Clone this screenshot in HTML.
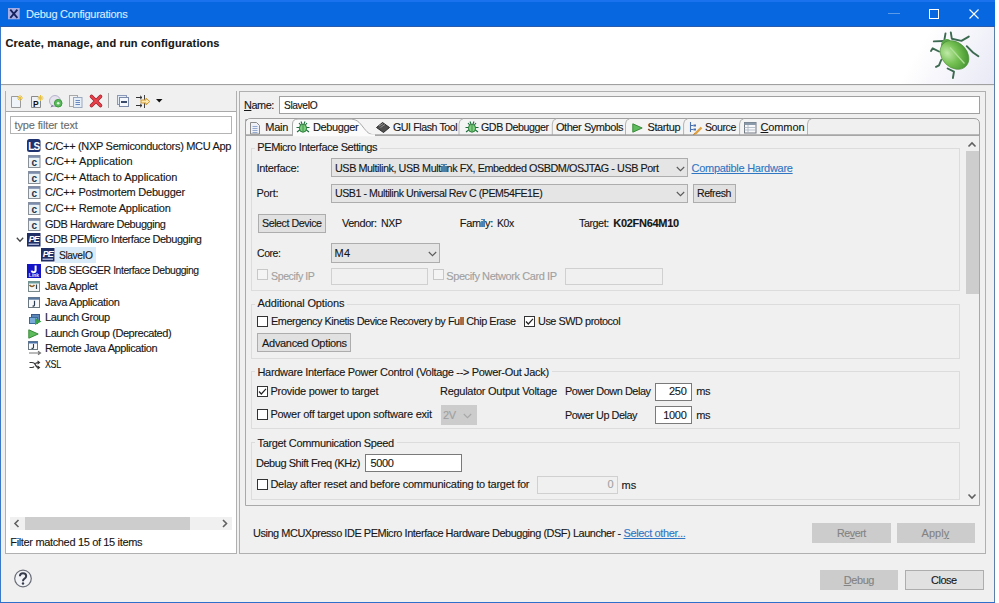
<!DOCTYPE html>
<html><head><meta charset="utf-8"><style>
html,body{margin:0;padding:0;width:999px;height:603px;overflow:hidden;background:#fff;}
body{position:relative;font-family:"Liberation Sans", sans-serif;}
.t{position:absolute;white-space:pre;line-height:14px;font-family:"Liberation Sans", sans-serif;-webkit-text-stroke:0.12px currentColor;}
u{text-decoration:underline;}
svg{position:absolute;overflow:visible;}
</style></head><body>
<div style="position:absolute;left:0px;top:0px;width:995px;height:603px;background:#f0f0f0;"></div>
<div style="position:absolute;left:0px;top:0px;width:995px;height:27px;background:#0667e0;"></div>
<div style="position:absolute;left:0px;top:0px;width:995px;height:2px;background:#1a72ee;"></div>
<div style="position:absolute;left:0px;top:26px;width:995px;height:1px;background:#2a5cae;"></div>
<div style="position:absolute;left:995px;top:0px;width:4px;height:603px;background:#fff;"></div>
<div style="position:absolute;left:0px;top:27px;width:1px;height:576px;background:#3a78c8;"></div>
<div style="position:absolute;left:994px;top:27px;width:1px;height:576px;background:#5a7fa8;"></div>
<div style="position:absolute;left:0px;top:602px;width:995px;height:1px;background:#2d6fca;"></div>
<div style="position:absolute;left:1px;top:27px;width:993px;height:57px;background:#fff;"></div>
<div style="position:absolute;left:1px;top:84px;width:993px;height:1px;background:#a0a0a0;"></div>
<div style="position:absolute;left:1px;top:85px;width:993px;height:1px;background:#e8e8e8;"></div>
<svg style="left:8.3px;top:7.7px" width="12" height="12" viewBox="0 0 12 12"><rect x="0" y="0" width="11.7" height="11.3" fill="#a4ace6"/><path d="M2.3 1.6 L9.4 9.8 M9.4 1.6 L2.3 9.8" stroke="#16205a" stroke-width="1.8"/></svg>
<div style="position:absolute;left:888px;top:13px;width:12px;height:1px;background:#5c9ae8;"></div>
<div style="position:absolute;left:929px;top:9px;width:9px;height:9px;border:1px solid #fff;box-sizing:border-box;width:10px;height:10px;"></div>
<svg style="left:969px;top:9px" width="10" height="10" viewBox="0 0 10 10"><path d="M0.5 0.5 L9.5 9.5 M9.5 0.5 L0.5 9.5" stroke="#fff" stroke-width="1.1"/></svg>
<div style="position:absolute;left:880px;top:27px;width:114px;height:57px;background:linear-gradient(120deg,#fff 35%,#e9e9f6 100%);"></div>
<div style="position:absolute;left:5px;top:90.5px;width:232px;height:463px;border:1px solid #b0b0b0;box-sizing:border-box;background:#fff;"></div>
<div style="position:absolute;left:6px;top:91px;width:230px;height:20px;background:#f0f0f0;"></div>
<div style="position:absolute;left:6px;top:111px;width:230px;height:1px;background:#a9a9a9;"></div>
<div style="position:absolute;left:10px;top:116px;width:222px;height:18px;border:1px solid #b4b4b4;box-sizing:border-box;background:#fff;"></div>
<div style="position:absolute;left:54.5px;top:247px;width:41.5px;height:15.5px;background:#d9ebf9;"></div>
<div style="position:absolute;left:10px;top:517px;width:222px;height:13px;background:#f0f0f0;"></div>
<div style="position:absolute;left:25px;top:517px;width:165px;height:13px;background:#cdcdcd;"></div>
<svg style="left:13px;top:519px" width="8" height="9" viewBox="0 0 8 9"><path d="M5.5 1 L2 4.5 L5.5 8" fill="none" stroke="#606060" stroke-width="1.6"/></svg>
<svg style="left:221px;top:519px" width="8" height="9" viewBox="0 0 8 9"><path d="M2 1 L5.5 4.5 L2 8" fill="none" stroke="#606060" stroke-width="1.6"/></svg>
<svg style="left:14px;top:570px" width="18" height="18" viewBox="0 0 18 18"><circle cx="9" cy="8.5" r="8.3" fill="#f2f3f7" stroke="#6a6e78" stroke-width="1.2"/><path d="M5.9 6.3 Q5.9 3.2 9 3.2 Q12.2 3.2 12.2 6 Q12.2 7.8 10.3 8.8 Q9 9.5 9 11.2" fill="none" stroke="#363c4c" stroke-width="2"/><circle cx="9" cy="13.5" r="1.2" fill="#363c4c"/></svg>
<div style="position:absolute;left:239px;top:91px;width:747px;height:462.5px;border:1px solid #b0b0b0;box-sizing:border-box;"></div>
<div style="position:absolute;left:279px;top:95.5px;width:701px;height:18px;border:1px solid #a0a0a0;box-sizing:border-box;background:#fff;"></div>
<div style="position:absolute;left:245px;top:118.5px;width:735px;height:387px;border:1px solid #a9a9a9;border-top-right-radius:6px;box-sizing:border-box;background:#f0f0f0;"></div>
<div style="position:absolute;left:246px;top:119.5px;width:733px;height:15px;background:#f2f2f2;border-top-right-radius:5px;"></div>
<div style="position:absolute;left:245px;top:134.5px;width:735px;height:1px;background:#a9a9a9;"></div>
<div style="position:absolute;left:965px;top:136px;width:14px;height:368px;background:#f0f0f0;"></div>
<div style="position:absolute;left:965.5px;top:151.3px;width:13px;height:142.5px;background:#cdcdcd;"></div>
<svg style="left:967px;top:141px" width="10" height="7" viewBox="0 0 10 7"><path d="M1.5 5.5 L5 2 L8.5 5.5" fill="none" stroke="#606060" stroke-width="1.6"/></svg>
<svg style="left:967px;top:493px" width="10" height="7" viewBox="0 0 10 7"><path d="M1.5 1.5 L5 5 L8.5 1.5" fill="none" stroke="#606060" stroke-width="1.6"/></svg>
<div style="position:absolute;left:251px;top:148px;width:709px;height:143px;border:1px solid #dcdcdc;box-sizing:border-box;"></div>
<div style="position:absolute;left:255px;top:147px;width:125px;height:3px;background:#f0f0f0;"></div>
<div style="position:absolute;left:251px;top:303.5px;width:709px;height:55.5px;border:1px solid #dcdcdc;box-sizing:border-box;"></div>
<div style="position:absolute;left:255px;top:302.5px;width:92px;height:3px;background:#f0f0f0;"></div>
<div style="position:absolute;left:251px;top:370.5px;width:709px;height:58.5px;border:1px solid #dcdcdc;box-sizing:border-box;"></div>
<div style="position:absolute;left:255px;top:369.5px;width:297px;height:3px;background:#f0f0f0;"></div>
<div style="position:absolute;left:251px;top:442px;width:709px;height:57.5px;border:1px solid #dcdcdc;box-sizing:border-box;"></div>
<div style="position:absolute;left:255px;top:441px;width:142px;height:3px;background:#f0f0f0;"></div>
<div style="position:absolute;left:331px;top:158.3px;width:356.5px;height:19.2px;border:1px solid #adadad;box-sizing:border-box;background:#e5e5e5;"></div>
<svg style="left:676px;top:166px" width="9" height="6" viewBox="0 0 9 6"><path d="M0.8 1 L4.5 4.7 L8.2 1" fill="none" stroke="#5a5a5a" stroke-width="1.1"/></svg>
<div style="position:absolute;left:331px;top:183.5px;width:356.5px;height:19px;border:1px solid #adadad;box-sizing:border-box;background:#e5e5e5;"></div>
<svg style="left:676px;top:191px" width="9" height="6" viewBox="0 0 9 6"><path d="M0.8 1 L4.5 4.7 L8.2 1" fill="none" stroke="#5a5a5a" stroke-width="1.1"/></svg>
<div style="position:absolute;left:693px;top:183.5px;width:42.5px;height:19px;border:1px solid #adadad;box-sizing:border-box;background:#e1e1e1;"></div>
<div style="position:absolute;left:257.5px;top:213.5px;width:68px;height:19.5px;border:1px solid #adadad;box-sizing:border-box;background:#e1e1e1;"></div>
<div style="position:absolute;left:331px;top:243.4px;width:109.2px;height:19.2px;border:1px solid #adadad;box-sizing:border-box;background:#e5e5e5;"></div>
<svg style="left:428px;top:251px" width="9" height="6" viewBox="0 0 9 6"><path d="M0.8 1 L4.5 4.7 L8.2 1" fill="none" stroke="#5a5a5a" stroke-width="1.1"/></svg>
<svg style="left:257px;top:269px" width="11" height="11" viewBox="0 0 11 11"><rect x="0.5" y="0.5" width="10" height="10" fill="#f4f4f4" stroke="#c8c8c8" stroke-width="1"/></svg>
<div style="position:absolute;left:331px;top:268px;width:97px;height:17px;border:1px solid #d0d0d0;box-sizing:border-box;background:#f0f0f0;"></div>
<svg style="left:433px;top:269px" width="11" height="11" viewBox="0 0 11 11"><rect x="0.5" y="0.5" width="10" height="10" fill="#f4f4f4" stroke="#c8c8c8" stroke-width="1"/></svg>
<div style="position:absolute;left:565px;top:267.5px;width:97.5px;height:17.8px;border:1px solid #d0d0d0;box-sizing:border-box;background:#f0f0f0;"></div>
<svg style="left:257px;top:315.5px" width="11" height="11" viewBox="0 0 11 11"><rect x="0.5" y="0.5" width="10" height="10" fill="#fff" stroke="#333" stroke-width="1"/></svg>
<svg style="left:523.5px;top:315.5px" width="11" height="11" viewBox="0 0 11 11"><rect x="0.5" y="0.5" width="10" height="10" fill="#fff" stroke="#333" stroke-width="1"/><path d="M2 5.5 L4.3 8 L9 2.8" fill="none" stroke="#222" stroke-width="1.2"/></svg>
<div style="position:absolute;left:257.4px;top:333px;width:93.2px;height:19.4px;border:1px solid #adadad;box-sizing:border-box;background:#e1e1e1;"></div>
<svg style="left:257px;top:386.3px" width="11" height="11" viewBox="0 0 11 11"><rect x="0.5" y="0.5" width="10" height="10" fill="#fff" stroke="#333" stroke-width="1"/><path d="M2 5.5 L4.3 8 L9 2.8" fill="none" stroke="#222" stroke-width="1.2"/></svg>
<div style="position:absolute;left:655.2px;top:382.5px;width:36.7px;height:18px;border:1px solid #7a7a7a;box-sizing:border-box;background:#fff;"></div>
<svg style="left:257px;top:408.6px" width="11" height="11" viewBox="0 0 11 11"><rect x="0.5" y="0.5" width="10" height="10" fill="#fff" stroke="#333" stroke-width="1"/></svg>
<div style="position:absolute;left:440.5px;top:405px;width:36px;height:19.6px;border:1px solid #cccccc;box-sizing:border-box;background:#cccccc;"></div>
<svg style="left:463px;top:413px" width="9" height="6" viewBox="0 0 9 6"><path d="M0.8 1 L4.5 4.7 L8.2 1" fill="none" stroke="#a8a8a8" stroke-width="1.1"/></svg>
<div style="position:absolute;left:655.2px;top:405.6px;width:36.7px;height:18.1px;border:1px solid #7a7a7a;box-sizing:border-box;background:#fff;"></div>
<div style="position:absolute;left:365px;top:453.7px;width:96.5px;height:17.9px;border:1px solid #7a7a7a;box-sizing:border-box;background:#fff;"></div>
<svg style="left:257px;top:479.1px" width="11" height="11" viewBox="0 0 11 11"><rect x="0.5" y="0.5" width="10" height="10" fill="#fff" stroke="#333" stroke-width="1"/></svg>
<div style="position:absolute;left:537.3px;top:476.1px;width:80.3px;height:18.3px;border:1px solid #d0d0d0;box-sizing:border-box;background:#f0f0f0;"></div>
<div style="position:absolute;left:812.4px;top:522.9px;width:78.2px;height:19.9px;background:#cccccc;"></div>
<div style="position:absolute;left:896.6px;top:522.9px;width:78.3px;height:19.9px;background:#cccccc;"></div>
<div style="position:absolute;left:819.9px;top:569.7px;width:78.3px;height:19.9px;background:#cccccc;"></div>
<div style="position:absolute;left:905.2px;top:570px;width:78.5px;height:19.7px;border:1px solid #adadad;box-sizing:border-box;background:#e1e1e1;"></div>
<svg style="left:245px;top:118px" width="736" height="20" viewBox="0 0 736 20"><path d="M0.5 17 V6 Q0.5 0.5 6 0.5 H729 Q734.5 0.5 734.5 6 V17" fill="#f0f0f0" stroke="#a0a0a0" stroke-width="1"/><path d="M1 17 V6 Q1 1 6 1 H562.5 V17 Z" fill="#f4f4f4"/><path d="M214 17 V6 Q214 1.5 218 0.8" fill="none" stroke="#b4b4b4" stroke-width="1"/><path d="M307.3 17 V6 Q307.3 1.5 311.3 0.8" fill="none" stroke="#b4b4b4" stroke-width="1"/><path d="M380.5 17 V6 Q380.5 1.5 384.5 0.8" fill="none" stroke="#b4b4b4" stroke-width="1"/><path d="M438.6 17 V6 Q438.6 1.5 442.6 0.8" fill="none" stroke="#b4b4b4" stroke-width="1"/><path d="M494.6 17 V6 Q494.6 1.5 498.6 0.8" fill="none" stroke="#b4b4b4" stroke-width="1"/><path d="M562.5 17 V6 Q562.5 1.5 566.5 0.8" fill="none" stroke="#b4b4b4" stroke-width="1"/><path d="M0.5 16.8 H47.5 M130 16.8 H735" stroke="#a0a0a0" stroke-width="1"/><path d="M47.5 17.5 V6 Q47.5 1 53 1 H104 C112 1 114 4 118 9 C122 14 124 16.8 130 16.8 V17.5 Z" fill="#fbfbfb" stroke="#a8a8a8" stroke-width="1"/><rect x="48" y="16.3" width="82" height="2" fill="#fbfbfb"/></svg>
<svg style="left:11px;top:95px" width="13" height="13" viewBox="0 0 13 13"><path d="M0.5 1.5 H7 L9.5 4 V12.5 H0.5 Z" fill="#eef4fa" stroke="#9a9a9a"/><path d="M9 0 V6 M6 3 H12 M7 1 L11 5 M11 1 L7 5" stroke="#e8c040" stroke-width="1"/></svg>
<svg style="left:31px;top:95px" width="14" height="13" viewBox="0 0 14 13"><path d="M0.5 1.5 H7 L9.5 4 V12.5 H0.5 Z" fill="#eef2f6" stroke="#8a8a8a"/><text x="2" y="11.5" font-family="Liberation Sans" font-weight="bold" font-size="8.5" fill="#111">P</text><path d="M9.5 0 V6 M6.5 3 H12.5 M7.5 1 L11.5 5 M11.5 1 L7.5 5" stroke="#e8c040" stroke-width="1"/></svg>
<svg style="left:49px;top:95px" width="14" height="13" viewBox="0 0 14 13"><circle cx="6" cy="6" r="5.5" fill="#e6e2ee" stroke="#b8b2cc"/><path d="M3 10 L1.5 12.5 L5 11" fill="#7a6a9a"/><circle cx="9.2" cy="8.2" r="3.8" fill="#5cb85c" stroke="#3a9a3a"/><circle cx="9.2" cy="8.2" r="1.3" fill="#dff5df"/></svg>
<svg style="left:69px;top:95px" width="14" height="13" viewBox="0 0 14 13"><rect x="0.5" y="0.5" width="8" height="11" fill="#f2f2f2" stroke="#a8a8a8"/><rect x="4.5" y="2.5" width="8.5" height="10" fill="#e6eef8" stroke="#9aa8c0"/><path d="M6.5 5.5 H11 M6.5 7.5 H11 M6.5 9.5 H11" stroke="#6a88c0"/></svg>
<svg style="left:90px;top:95px" width="12" height="12" viewBox="0 0 12 12"><path d="M1.5 1.5 L10.5 10.5 M10.5 1.5 L1.5 10.5" stroke="#a02028" stroke-width="3.6" stroke-linecap="round"/><path d="M1.5 1.5 L10.5 10.5 M10.5 1.5 L1.5 10.5" stroke="#e8404a" stroke-width="2.4" stroke-linecap="round"/></svg>
<div style="position:absolute;left:107.5px;top:93px;width:1.2px;height:15px;background:#a8a8a8;"></div>
<svg style="left:117px;top:95px" width="12" height="12" viewBox="0 0 12 12"><rect x="0.5" y="0.5" width="9" height="9" fill="#e4ecf6" stroke="#8a9ab8"/><rect x="2.5" y="2.5" width="9" height="9" fill="#f4f8fc" stroke="#7a8aa8"/><rect x="4" y="6" width="6" height="2" fill="#3a4a6a"/></svg>
<svg style="left:136px;top:95px" width="15" height="13" viewBox="0 0 15 13"><path d="M0 2.5 H6 M4 0.8 L6 2.5 L4 4.2 M0 10.5 H6 M4 8.8 L6 10.5 L4 12.2" fill="none" stroke="#333" stroke-width="1"/><path d="M8.5 0 V13" stroke="#444" stroke-width="1"/><path d="M5 5 H10 V3.2 L13.8 6.5 L10 9.8 V8 H5 Z" fill="#fde8b0" stroke="#d09a30" stroke-width="1"/></svg>
<svg style="left:156px;top:99px" width="7" height="4" viewBox="0 0 7 4"><path d="M0 0 H6.5 L3.25 3.5 Z" fill="#111"/></svg>
<svg style="left:27px;top:139px" width="14" height="13" viewBox="0 0 14 13"><rect x="0" y="0" width="13.5" height="13" rx="2.5" fill="#1f3270"/><text x="6.8" y="10.8" text-anchor="middle" font-family="Liberation Sans" font-weight="bold" font-size="10" letter-spacing="-0.8" fill="#fff">LS</text></svg>
<svg style="left:28px;top:155.2px" width="13" height="13" viewBox="0 0 13 13"><rect x="0.5" y="0.5" width="11.5" height="12" fill="#eaf2f6" stroke="#8a9098"/><rect x="0.5" y="0.5" width="11.5" height="2.3" fill="#7c8cac"/><text x="6.3" y="11" text-anchor="middle" font-family="Liberation Sans" font-weight="bold" font-size="10" fill="#24344a">c</text></svg>
<svg style="left:28px;top:170.79999999999998px" width="13" height="13" viewBox="0 0 13 13"><rect x="0.5" y="0.5" width="11.5" height="12" fill="#eaf2f6" stroke="#8a9098"/><rect x="0.5" y="0.5" width="11.5" height="2.3" fill="#7c8cac"/><text x="6.3" y="11" text-anchor="middle" font-family="Liberation Sans" font-weight="bold" font-size="10" fill="#24344a">c</text></svg>
<svg style="left:28px;top:186.39999999999998px" width="13" height="13" viewBox="0 0 13 13"><rect x="0.5" y="0.5" width="11.5" height="12" fill="#eaf2f6" stroke="#8a9098"/><rect x="0.5" y="0.5" width="11.5" height="2.3" fill="#7c8cac"/><text x="6.3" y="11" text-anchor="middle" font-family="Liberation Sans" font-weight="bold" font-size="10" fill="#24344a">c</text></svg>
<svg style="left:28px;top:202.0px" width="13" height="13" viewBox="0 0 13 13"><rect x="0.5" y="0.5" width="11.5" height="12" fill="#eaf2f6" stroke="#8a9098"/><rect x="0.5" y="0.5" width="11.5" height="2.3" fill="#7c8cac"/><text x="6.3" y="11" text-anchor="middle" font-family="Liberation Sans" font-weight="bold" font-size="10" fill="#24344a">c</text></svg>
<svg style="left:28px;top:217.6px" width="13" height="13" viewBox="0 0 13 13"><rect x="0.5" y="0.5" width="11.5" height="12" fill="#eaf2f6" stroke="#8a9098"/><rect x="0.5" y="0.5" width="11.5" height="2.3" fill="#7c8cac"/><text x="6.3" y="11" text-anchor="middle" font-family="Liberation Sans" font-weight="bold" font-size="10" fill="#24344a">c</text></svg>
<svg style="left:27px;top:233px" width="14" height="14" viewBox="0 0 14 14"><rect x="0" y="0" width="13.5" height="13.5" fill="#1f2f66"/><text x="6.8" y="9.3" text-anchor="middle" font-family="Liberation Sans" font-weight="bold" font-style="italic" font-size="9" letter-spacing="-1" fill="#fff">PE</text><rect x="1.5" y="10.6" width="10.5" height="1.2" fill="#c8d0f0"/></svg>
<svg style="left:41px;top:248.2px" width="14" height="14" viewBox="0 0 14 14"><rect x="0" y="0" width="13.5" height="13.5" fill="#1f2f66"/><text x="6.8" y="9.3" text-anchor="middle" font-family="Liberation Sans" font-weight="bold" font-style="italic" font-size="9" letter-spacing="-1" fill="#fff">PE</text><rect x="1.5" y="10.6" width="10.5" height="1.2" fill="#c8d0f0"/></svg>
<svg style="left:27px;top:264px" width="14" height="14" viewBox="0 0 14 14"><rect x="0" y="0" width="14" height="14" fill="#1414c8"/><path d="M8.6 1.5 V6.2 Q8.6 8.2 6.5 8.2 Q4.8 8.2 4.6 6.6" fill="none" stroke="#fff" stroke-width="2"/><text x="7" y="13" text-anchor="middle" font-family="Liberation Sans" font-weight="bold" font-size="5" fill="#e8e8ff">Link</text></svg>
<svg style="left:28px;top:281px" width="12" height="11" viewBox="0 0 12 11"><rect x="0.5" y="0.5" width="11" height="10" fill="#f4f6f6" stroke="#7a8a8a"/><rect x="0.5" y="0.5" width="11" height="2" fill="#6a9a9a"/><path d="M1.5 4 Q4 7 6.5 4" fill="none" stroke="#8a5a20" stroke-width="1.6"/><path d="M8.5 3.5 V8" stroke="#304050" stroke-width="1.2"/></svg>
<svg style="left:28px;top:296.5px" width="12" height="11" viewBox="0 0 12 11"><rect x="0.5" y="0.5" width="11" height="10" fill="#f6f8fa" stroke="#6a7680"/><rect x="0.5" y="0.5" width="11" height="2.2" fill="#5a7aa0"/><path d="M6.5 3.8 V8 Q6.5 9.2 4.5 9" fill="none" stroke="#2a3a50" stroke-width="1.2"/></svg>
<svg style="left:29px;top:313.5px" width="13" height="11" viewBox="0 0 13 11"><rect x="2.5" y="0.5" width="8" height="6" fill="#5a86b8" stroke="#3a5a8a"/><rect x="0.5" y="3.5" width="8" height="6" fill="#7aaad8" stroke="#3a6a9a"/><path d="M6 4 L12.5 7.5 L6 11 Z" fill="#3aa04a"/></svg>
<svg style="left:28px;top:328.8px" width="11" height="10" viewBox="0 0 11 10"><path d="M0.8 0.8 L10.2 5 L0.8 9.2 Z" fill="#5cbc5c" stroke="#3a8a3a" stroke-width="1"/></svg>
<svg style="left:28px;top:341px" width="14" height="14" viewBox="0 0 14 14"><rect x="0.5" y="0.5" width="9" height="8" fill="#f6f8fa" stroke="#6a7680"/><rect x="0.5" y="0.5" width="9" height="2" fill="#4a70a8"/><path d="M5.5 3 V6.5 Q5.5 7.5 3.5 7.3" fill="none" stroke="#2a3a50" stroke-width="1.1"/><path d="M1 12 H12 M10 10.2 L12.5 12 L10 13.8" fill="none" stroke="#777" stroke-width="1.2"/></svg>
<svg style="left:28.5px;top:360px" width="11" height="10" viewBox="0 0 11 10"><path d="M0.5 2.5 H3 Q5.5 2.5 6.5 5 Q7.5 7.5 10 7.5 M0.5 7.5 H3 Q4.5 7.5 5 6.5 M6.5 3.5 Q7.5 2.5 10 2.5" fill="none" stroke="#333" stroke-width="1.2"/><path d="M8.5 0.8 L10.5 2.5 L8.5 4.2 M8.5 5.8 L10.5 7.5 L8.5 9.2" fill="none" stroke="#333" stroke-width="1.1"/></svg>
<svg style="left:16px;top:237px" width="8" height="6" viewBox="0 0 8 6"><path d="M0.8 0.8 L4 4.2 L7.2 0.8" fill="none" stroke="#444" stroke-width="1.3"/></svg>
<svg style="left:250px;top:121.5px" width="10" height="12.5" viewBox="0 0 10 12.5"><path d="M0.5 0.5 H6.5 L9.5 3.5 V12 H0.5 Z" fill="#eef2f8" stroke="#8a8a8a"/><path d="M2.5 4.5 H7.5 M2.5 6.5 H7.5 M2.5 8.5 H7.5 M2.5 10.5 H7.5" stroke="#8aa0c8" stroke-width="0.9"/></svg>
<svg style="left:296px;top:121px" width="14" height="13" viewBox="0 0 14 13"><g stroke="#1a6a3a" stroke-width="1.1" fill="none"><path d="M3 2 L5 4.5 M11 2 L9 4.5 M0.5 6.5 L3.5 6.5 M13.5 6.5 L10.5 6.5 M1 11 L4 8.8 M13 11 L10 8.8 M5 0.5 L6 3 M9 0.5 L8 3"/></g><ellipse cx="7" cy="7.2" rx="3.6" ry="4" fill="#7ed07e" stroke="#2a7a3a" stroke-width="1"/><path d="M7 4 V10.5" stroke="#2a7a3a" stroke-width="0.7"/></svg>
<svg style="left:464.5px;top:121px" width="14" height="13" viewBox="0 0 14 13"><g stroke="#1a6a3a" stroke-width="1.1" fill="none"><path d="M3 2 L5 4.5 M11 2 L9 4.5 M0.5 6.5 L3.5 6.5 M13.5 6.5 L10.5 6.5 M1 11 L4 8.8 M13 11 L10 8.8 M5 0.5 L6 3 M9 0.5 L8 3"/></g><ellipse cx="7" cy="7.2" rx="3.6" ry="4" fill="#7ed07e" stroke="#2a7a3a" stroke-width="1"/><path d="M7 4 V10.5" stroke="#2a7a3a" stroke-width="0.7"/></svg>
<svg style="left:376px;top:121.5px" width="14" height="11" viewBox="0 0 14 11"><path d="M6.5 0.5 L13.5 5.5 L7.5 10.5 L0.5 5.5 Z" fill="#505050" stroke="#2a2a2a"/><path d="M3 4 L7 1.5 M4.5 5.5 L9 2.5" stroke="#a0a0a0" stroke-width="0.8"/></svg>
<svg style="left:631.5px;top:122.8px" width="11" height="10" viewBox="0 0 11 10"><path d="M0.8 0.8 L10.2 5 L0.8 9.2 Z" fill="#5cbc5c" stroke="#3a8a3a" stroke-width="1"/></svg>
<svg style="left:688.5px;top:121.5px" width="14" height="13" viewBox="0 0 14 13"><path d="M1.5 0 V10 M1.5 3.5 H4.5 M1.5 7.5 H4.5" stroke="#4a70b0" stroke-width="1.1" fill="none"/><rect x="4.5" y="2.5" width="2.5" height="2" fill="#4a70b0"/><rect x="4.5" y="6.5" width="2.5" height="2" fill="#4a70b0"/><path d="M5.5 12.5 L12.5 5.5" stroke="#e0a040" stroke-width="2.4"/><path d="M4.5 13 L5.5 11.5" stroke="#b07020" stroke-width="1"/></svg>
<svg style="left:744px;top:121.5px" width="12.5" height="11.5" viewBox="0 0 12.5 11.5"><rect x="0.5" y="0.5" width="11.5" height="10.5" fill="#f8f8fa" stroke="#707880"/><rect x="0.5" y="0.5" width="11.5" height="2.5" fill="#8a9aaa"/><path d="M0.5 5.5 H12 M0.5 8 H12 M4 3 V11" stroke="#a8b4c0" stroke-width="0.8"/></svg>
<svg style="left:928px;top:28px" width="56" height="54" viewBox="0 0 56 54"><defs><radialGradient id="bg1" cx="0.35" cy="0.3" r="0.85"><stop offset="0" stop-color="#c0eaa8"/><stop offset="0.45" stop-color="#74c052"/><stop offset="1" stop-color="#3a8a2a"/></radialGradient></defs><g fill="none" stroke="#3c6a50" stroke-width="1.9" stroke-linecap="round" stroke-linejoin="round"><path d="M16.4 11.8 L17.5 5.4"/><path d="M16 13 L5.8 13.4"/><path d="M22.8 4.4 L23.8 10.7 L33.4 12.9 L40.8 8.6"/><path d="M38.7 18.2 L45 24.5 L50.4 28.3"/><path d="M11 23.5 L4.7 20.3 L3 23"/><path d="M13.2 32 L11 37.3 L8 38.9"/><path d="M19.6 40.5 L26 43.6 L24.9 50"/></g><ellipse cx="18" cy="16" rx="5.5" ry="4.5" fill="#5aa848" transform="rotate(-45 18 16)"/><ellipse cx="26.5" cy="27" rx="12.5" ry="16" fill="url(#bg1)" stroke="#4a8a3a" stroke-width="0.6" transform="rotate(-45 26.5 27)"/><path d="M22 19.5 L36.5 35.5" stroke="#b0e098" stroke-width="1.2"/></svg>
<div class="t" style="left:26.10px;top:6.70px;font-size:11px;letter-spacing:-0.253px;color:#dcebff;">Debug Configurations</div>
<div class="t" style="left:5.50px;top:35.50px;font-size:11px;letter-spacing:0.167px;color:#161616;font-weight:700;">Create, manage, and run configurations</div>
<div class="t" style="left:14.50px;top:117.80px;font-size:11px;letter-spacing:-0.135px;color:#6d6d6d;">type filter text</div>
<div class="t" style="left:45.00px;top:138.60px;font-size:11px;letter-spacing:-0.308px;color:#161616;">C/C++ (NXP Semiconductors) MCU App</div>
<div class="t" style="left:45.00px;top:154.20px;font-size:11px;letter-spacing:-0.023px;color:#161616;">C/C++ Application</div>
<div class="t" style="left:45.00px;top:169.80px;font-size:11px;letter-spacing:-0.055px;color:#161616;">C/C++ Attach to Application</div>
<div class="t" style="left:45.00px;top:185.40px;font-size:11px;letter-spacing:-0.226px;color:#161616;">C/C++ Postmortem Debugger</div>
<div class="t" style="left:45.00px;top:201.00px;font-size:11px;letter-spacing:-0.167px;color:#161616;">C/C++ Remote Application</div>
<div class="t" style="left:45.00px;top:216.60px;font-size:11px;letter-spacing:-0.450px;color:#161616;transform:scaleX(0.9958);transform-origin:0 0;">GDB Hardware Debugging</div>
<div class="t" style="left:45.00px;top:232.20px;font-size:11px;letter-spacing:-0.450px;color:#161616;transform:scaleX(0.9994);transform-origin:0 0;">GDB PEMicro Interface Debugging</div>
<div class="t" style="left:58.50px;top:247.80px;font-size:11px;letter-spacing:-0.450px;color:#161616;transform:scaleX(0.9311);transform-origin:0 0;">SlaveIO</div>
<div class="t" style="left:45.00px;top:263.40px;font-size:11px;letter-spacing:-0.450px;color:#161616;transform:scaleX(0.9454);transform-origin:0 0;">GDB SEGGER Interface Debugging</div>
<div class="t" style="left:45.00px;top:279.00px;font-size:11px;letter-spacing:-0.408px;color:#161616;">Java Applet</div>
<div class="t" style="left:45.00px;top:294.60px;font-size:11px;letter-spacing:-0.313px;color:#161616;">Java Application</div>
<div class="t" style="left:45.00px;top:310.20px;font-size:11px;letter-spacing:-0.411px;color:#161616;">Launch Group</div>
<div class="t" style="left:45.00px;top:325.80px;font-size:11px;letter-spacing:-0.432px;color:#161616;">Launch Group (Deprecated)</div>
<div class="t" style="left:45.00px;top:341.40px;font-size:11px;letter-spacing:-0.385px;color:#161616;">Remote Java Application</div>
<div class="t" style="left:45.00px;top:357.00px;font-size:11px;letter-spacing:-0.450px;color:#161616;transform:scaleX(0.8097);transform-origin:0 0;">XSL</div>
<div class="t" style="left:10.30px;top:534.60px;font-size:11px;letter-spacing:-0.344px;color:#161616;">Filter matched 15 of 15 items</div>
<div class="t" style="left:244.20px;top:97.60px;font-size:11px;letter-spacing:-0.450px;color:#161616;transform:scaleX(0.9897);transform-origin:0 0;"><u>N</u>ame:</div>
<div class="t" style="left:284.30px;top:97.60px;font-size:11px;letter-spacing:-0.450px;color:#161616;transform:scaleX(0.9283);transform-origin:0 0;">SlaveIO</div>
<div class="t" style="left:265.30px;top:119.80px;font-size:11px;letter-spacing:-0.248px;color:#161616;">Main</div>
<div class="t" style="left:312.90px;top:119.80px;font-size:11px;letter-spacing:-0.375px;color:#161616;">Debugger</div>
<div class="t" style="left:392.50px;top:119.80px;font-size:11px;letter-spacing:-0.450px;color:#161616;transform:scaleX(0.9694);transform-origin:0 0;">GUI Flash Tool</div>
<div class="t" style="left:481.10px;top:119.80px;font-size:11px;letter-spacing:-0.450px;color:#161616;transform:scaleX(0.9701);transform-origin:0 0;">GDB Debugger</div>
<div class="t" style="left:555.90px;top:119.80px;font-size:11px;letter-spacing:-0.429px;color:#161616;">Other Symbols</div>
<div class="t" style="left:647.50px;top:119.80px;font-size:11px;letter-spacing:-0.411px;color:#161616;">Startup</div>
<div class="t" style="left:705.10px;top:119.80px;font-size:11px;letter-spacing:-0.450px;color:#161616;transform:scaleX(0.9617);transform-origin:0 0;">Source</div>
<div class="t" style="left:760.50px;top:119.80px;font-size:11px;letter-spacing:-0.125px;color:#161616;"><u>C</u>ommon</div>
<div class="t" style="left:257.30px;top:140.00px;font-size:11px;letter-spacing:-0.397px;color:#161616;">PEMicro Interface Settings</div>
<div class="t" style="left:256.50px;top:161.00px;font-size:11px;letter-spacing:-0.340px;color:#161616;">Interface:</div>
<div class="t" style="left:334.50px;top:161.00px;font-size:11px;letter-spacing:-0.450px;color:#161616;transform:scaleX(0.9823);transform-origin:0 0;">USB Multilink, USB Multilink FX, Embedded OSBDM/OSJTAG - USB Port</div>
<div class="t" style="left:691.50px;top:160.80px;font-size:11px;letter-spacing:-0.277px;color:#2f76c3;text-decoration:underline;">Compatible Hardware</div>
<div class="t" style="left:256.50px;top:186.00px;font-size:11px;letter-spacing:-0.309px;color:#161616;">Port:</div>
<div class="t" style="left:334.50px;top:186.20px;font-size:11px;letter-spacing:-0.450px;color:#161616;transform:scaleX(0.9646);transform-origin:0 0;">USB1 - Multilink Universal Rev C (PEM54FE1E)</div>
<div class="t" style="left:697.10px;top:186.20px;font-size:11px;letter-spacing:-0.450px;color:#161616;transform:scaleX(0.9589);transform-origin:0 0;">Refresh</div>
<div class="t" style="left:261.90px;top:216.20px;font-size:11px;letter-spacing:-0.450px;color:#161616;transform:scaleX(0.9693);transform-origin:0 0;">Select Device</div>
<div class="t" style="left:341.90px;top:216.20px;font-size:11px;letter-spacing:-0.450px;color:#161616;transform:scaleX(0.9935);transform-origin:0 0;">Vendor:</div>
<div class="t" style="left:380.50px;top:216.20px;font-size:11px;letter-spacing:-0.450px;color:#161616;transform:scaleX(0.9650);transform-origin:0 0;">NXP</div>
<div class="t" style="left:459.80px;top:216.40px;font-size:11px;letter-spacing:-0.342px;color:#161616;">Family:</div>
<div class="t" style="left:497.10px;top:216.40px;font-size:11px;letter-spacing:-0.450px;color:#161616;transform:scaleX(0.9491);transform-origin:0 0;">K0x</div>
<div class="t" style="left:578.70px;top:216.40px;font-size:11px;letter-spacing:-0.450px;color:#161616;transform:scaleX(0.9753);transform-origin:0 0;">Target:</div>
<div class="t" style="left:613.30px;top:216.40px;font-size:11px;letter-spacing:-0.298px;color:#161616;font-weight:700;">K02FN64M10</div>
<div class="t" style="left:256.50px;top:245.80px;font-size:11px;letter-spacing:-0.450px;color:#161616;transform:scaleX(0.9541);transform-origin:0 0;">Core:</div>
<div class="t" style="left:334.50px;top:245.80px;font-size:11px;letter-spacing:0.319px;color:#161616;">M4</div>
<div class="t" style="left:270.50px;top:268.50px;font-size:11px;letter-spacing:-0.450px;color:#a0a0a0;transform:scaleX(0.9667);transform-origin:0 0;">Specify IP</div>
<div class="t" style="left:446.30px;top:268.50px;font-size:11px;letter-spacing:-0.415px;color:#a0a0a0;">Specify Network Card IP</div>
<div class="t" style="left:257.50px;top:296.20px;font-size:11px;letter-spacing:-0.134px;color:#161616;">Additional Options</div>
<div class="t" style="left:270.50px;top:313.60px;font-size:11px;letter-spacing:-0.450px;color:#161616;transform:scaleX(0.9883);transform-origin:0 0;">Emergency Kinetis Device Recovery by Full Chip Erase</div>
<div class="t" style="left:537.50px;top:313.60px;font-size:11px;letter-spacing:-0.450px;color:#161616;transform:scaleX(0.9863);transform-origin:0 0;">Use SWD protocol</div>
<div class="t" style="left:262.10px;top:335.80px;font-size:11px;letter-spacing:-0.326px;color:#161616;">Advanced Options</div>
<div class="t" style="left:257.50px;top:364.90px;font-size:11px;letter-spacing:-0.332px;color:#161616;">Hardware Interface Power Control (Voltage --&gt; Power-Out Jack)</div>
<div class="t" style="left:270.40px;top:383.70px;font-size:11px;letter-spacing:-0.256px;color:#161616;">Provide power to target</div>
<div class="t" style="left:440.00px;top:384.20px;font-size:11px;letter-spacing:-0.275px;color:#161616;">Regulator Output Voltage</div>
<div class="t" style="left:565.20px;top:384.20px;font-size:11px;letter-spacing:-0.450px;color:#161616;transform:scaleX(0.9907);transform-origin:0 0;">Power Down Delay</div>
<div class="t" style="left:669.04px;top:384.20px;font-size:11px;letter-spacing:-0.300px;color:#161616;">250</div>
<div class="t" style="left:696.20px;top:384.20px;font-size:11px;letter-spacing:-0.372px;color:#161616;">ms</div>
<div class="t" style="left:270.40px;top:407.20px;font-size:11px;letter-spacing:-0.238px;color:#161616;">Power off target upon software exit</div>
<div class="t" style="left:443.00px;top:407.50px;font-size:11px;letter-spacing:-0.450px;color:#a0a0a0;transform:scaleX(0.9984);transform-origin:0 0;">2V</div>
<div class="t" style="left:565.20px;top:407.70px;font-size:11px;letter-spacing:-0.450px;color:#161616;transform:scaleX(0.9844);transform-origin:0 0;">Power Up Delay</div>
<div class="t" style="left:663.22px;top:407.70px;font-size:11px;letter-spacing:-0.300px;color:#161616;">1000</div>
<div class="t" style="left:696.20px;top:407.70px;font-size:11px;letter-spacing:-0.372px;color:#161616;">ms</div>
<div class="t" style="left:257.50px;top:435.80px;font-size:11px;letter-spacing:-0.329px;color:#161616;">Target Communication Speed</div>
<div class="t" style="left:256.30px;top:456.10px;font-size:11px;letter-spacing:-0.450px;color:#161616;transform:scaleX(0.9964);transform-origin:0 0;">Debug Shift Freq (KHz)</div>
<div class="t" style="left:370.40px;top:456.10px;font-size:11px;letter-spacing:-0.300px;color:#161616;">5000</div>
<div class="t" style="left:270.40px;top:477.20px;font-size:11px;letter-spacing:-0.247px;color:#161616;">Delay after reset and before communicating to target for</div>
<div class="t" style="left:607.38px;top:477.20px;font-size:11px;letter-spacing:0.000px;color:#a0a0a0;">0</div>
<div class="t" style="left:621.50px;top:477.50px;font-size:11px;letter-spacing:0.128px;color:#161616;">ms</div>
<div class="t" style="left:253.00px;top:526.30px;font-size:11px;letter-spacing:-0.450px;color:#161616;transform:scaleX(0.9931);transform-origin:0 0;">Using MCUXpresso IDE PEMicro Interface Hardware Debugging (DSF) Launcher -</div>
<div class="t" style="left:623.50px;top:526.30px;font-size:11px;letter-spacing:-0.362px;color:#2f76c3;text-decoration:underline;">Select other...</div>
<div class="t" style="left:836.50px;top:525.80px;font-size:11px;letter-spacing:-0.450px;color:#838383;transform:scaleX(0.9706);transform-origin:0 0;">Re<u>v</u>ert</div>
<div class="t" style="left:921.50px;top:525.80px;font-size:11px;letter-spacing:0.042px;color:#838383;">Appl<u>y</u></div>
<div class="t" style="left:843.70px;top:572.70px;font-size:11px;letter-spacing:-0.405px;color:#838383;"><u>D</u>ebug</div>
<div class="t" style="left:931.10px;top:572.70px;font-size:11px;letter-spacing:-0.450px;color:#161616;transform:scaleX(0.9951);transform-origin:0 0;">Close</div>

</body></html>
